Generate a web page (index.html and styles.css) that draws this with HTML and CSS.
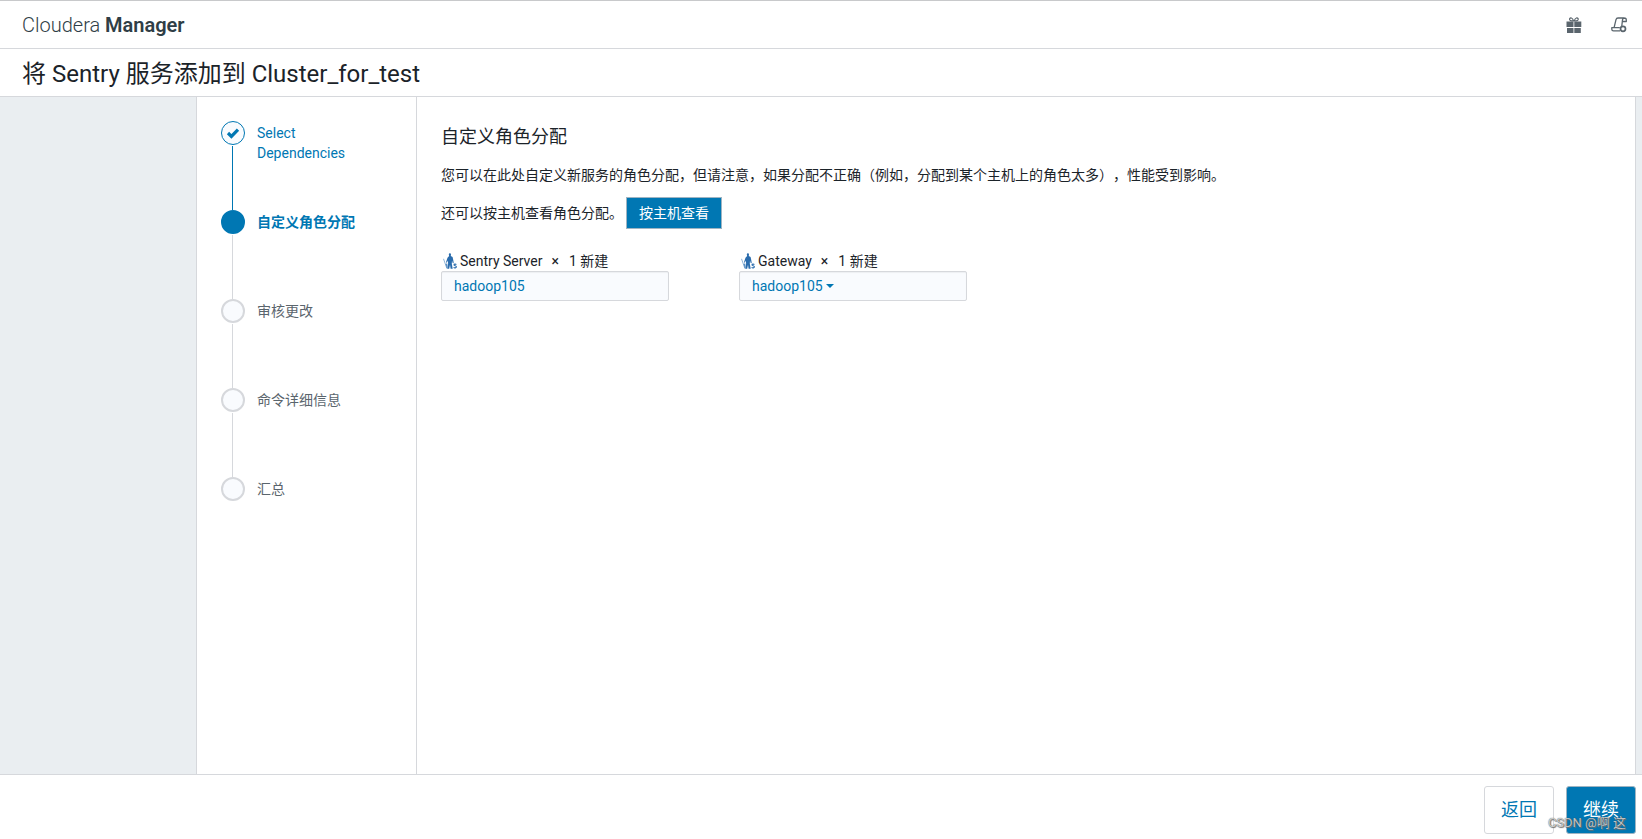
FILE: index.html
```html
<!DOCTYPE html>
<html lang="zh-CN">
<head>
<meta charset="utf-8">
<meta name="viewport" content="width=device-width, initial-scale=1">
<title>Cloudera Manager</title>
<link rel="stylesheet" href="styles.css">
</head>
<body>
<svg class="defs" aria-hidden="true">
  <symbol id="role-icon" viewBox="0 0 14 16">
    <path d="M5.800 1.200Q5.800.2 6.900.2T8 1.300L7.800 2.900 9.600 4l.9 4.200.2 2-1-.2L9 7.500l-.2 3.200.9 5H7.600L7 11.800l-.8 3.900H4.400l.7-5.200-.2-3L3.800 9.800l-.8-.6 1.500-4.400 1.600-1.900z" fill="#2a6cad"/>
    <path d="M.5 5.800l3.300 9.400" fill="none" stroke="#8fb4d8" stroke-width="1"/>
    <path d="M2.600 11l1.600-.8.700 5.400H3.700z" fill="#5b90c3"/>
    <path d="M13.400 11.500c-1-.7-2.500-.4-2.400.5.200 1 2.400.6 2.400 1.800 0 1.200-1.900 1.400-2.800.6" fill="none" stroke="#2a6cad" stroke-width="1.100"/>
  </symbol>
</svg>
<header class="topbar">
  <div class="brand">Cloudera <strong>Manager</strong></div>
  <div class="tools">
    <button class="tool" type="button" aria-label="新增功能">
      <svg width="16" height="16" viewBox="0 0 16 16" fill="#5a656d">
        <path d="M.5 4.500h7V10h-7zM8.300 4.500h7V10h-7zM1 11h6.500v5H1zM8.300 11h6.500v5H8.300z"/>
        <path d="M7.500 4C4.500 4 3.300 3.300 3.600 2 4 .4 6.700.3 7.500 4zM8.300 4c3 0 4.200-.7 3.900-2C11.800.4 9.100.3 8.300 4z" fill="none" stroke="#5a656d" stroke-width="1.200"/>
      </svg>
    </button>
    <button class="tool" type="button" aria-label="正在运行的命令">
      <svg width="16" height="16" viewBox="0 0 16 16" fill="none" stroke="#5a656d" stroke-width="1.300" stroke-linejoin="round">
        <path d="M3.200 10.200L5 2.700C5.300 1.500 6 1 7 1h6.500M13.500 1c-1.100 0-1.900.8-2 1.900L10.800 9M13.300 1c1.300 0 2 .9 2 2v1.500h-3.900M9 13.800H2.500C1.300 13.800.8 13 .8 12.200v-1.600h8"/>
        <circle cx="12" cy="11.800" r="2.500" stroke-width="1.700"/>
      </svg>
    </button>
  </div>
</header>
<div class="titlebar"><h1>将 Sentry 服务添加到 Cluster_for_test</h1></div>
<div class="workspace">
  <nav class="sidebar" aria-label="步骤">
    <ol class="steps">
      <li class="step done">
        <span class="marker"><svg width="14" height="12" viewBox="0 0 14 12"><path d="M2 6l3.400 3.400L12 2.600" fill="none" stroke="#0077b3" stroke-width="3.200"/></svg></span>
        <span class="label">Select Dependencies</span>
      </li>
      <li class="step current" aria-current="step"><span class="marker"></span><span class="label">自定义角色分配</span></li>
      <li class="step"><span class="marker"></span><span class="label">审核更改</span></li>
      <li class="step"><span class="marker"></span><span class="label">命令详细信息</span></li>
      <li class="step"><span class="marker"></span><span class="label">汇总</span></li>
    </ol>
  </nav>
  <main class="content">
    <h2>自定义角色分配</h2>
    <p class="intro">您可以在此处自定义新服务的角色分配，但请注意，如果分配不正确（例如，分配到某个主机上的角色太多），性能受到影响。</p>
    <div class="by-host">
      <span>还可以按主机查看角色分配。</span>
      <button class="btn-small" type="button">按主机查看</button>
    </div>
    <div class="roles">
      <section class="role">
        <div class="role-head" id="role-server"><svg class="role-icon" width="14" height="16"><use href="#role-icon"/></svg><span class="name">Sentry Server</span><span class="times">×</span><span>1 新建</span></div>
        <button class="hosts" type="button" aria-describedby="role-server">hadoop105</button>
      </section>
      <section class="role">
        <div class="role-head" id="role-gateway"><svg class="role-icon" width="14" height="16"><use href="#role-icon"/></svg><span class="name">Gateway</span><span class="times">×</span><span>1 新建</span></div>
        <button class="hosts" type="button" aria-haspopup="true" aria-describedby="role-gateway">hadoop105<span class="caret"></span></button>
      </section>
    </div>
  </main>
</div>
<footer class="actions">
  <button class="btn" type="button">返回</button>
  <button class="btn primary" type="button">继续</button>
  <span class="credit">CSDN @啊 这</span>
</footer>
</body>
</html>
```
FILE: styles.css
```css
* {
  box-sizing: border-box;
}

body {
  margin: 0;
  min-height: 100vh;
  display: flex;
  flex-direction: column;
  background: #fff;
  color: #1b2329;
  font: 14px/20px Roboto, "Noto Sans CJK SC", sans-serif;
  text-spacing-trim: space-all;
}

button {
  font: inherit;
  cursor: pointer;
}

.defs {
  position: absolute;
  width: 0;
  height: 0;
}

.topbar {
  display: flex;
  align-items: center;
  justify-content: space-between;
  height: 49px;
  padding: 0 15px 0 22px;
  border-top: 1px solid #c8c9cb;
  border-bottom: 1px solid #d6d8dc;
}

.brand {
  color: #2f3e46;
  font-size: 20px;
  font-weight: 300;
  line-height: 24px;
}

.brand strong {
  font-weight: 600;
}

.tools {
  display: flex;
  gap: 29px;
}

.tool {
  display: flex;
  padding: 0;
  border: 0;
  background: none;
}

.titlebar {
  display: flex;
  align-items: center;
  height: 48px;
  padding: 2px 22px 0;
  border-bottom: 1px solid #d6d8dc;
}

h1 {
  margin: 0;
  font-size: 24px;
  font-weight: 400;
  line-height: 32px;
}

.workspace {
  flex: 1;
  display: flex;
  padding: 0 6px 0 196px;
  background: #eaeef1;
}

.sidebar {
  flex: 0 0 220px;
  padding: 24px;
  border-left: 1px solid #d6d8dc;
  background: #fff;
}

.steps {
  margin: 0;
  padding: 0;
  list-style: none;
}

.step {
  display: grid;
  grid-template-columns: 24px 1fr;
  grid-template-rows: 24px 1fr;
  column-gap: 12px;
  min-height: 89px;
  color: #5a656d;
}

.marker {
  display: flex;
  align-items: center;
  justify-content: center;
  width: 24px;
  height: 24px;
  border: 2px solid #d6d8dc;
  border-radius: 50%;
  background: #f9fbfe;
}

.step::after {
  content: "";
  grid-column: 1;
  grid-row: 2;
  width: 1px;
  margin: 1px 0 0 11px;
  background: #d6d8dc;
}

.step:last-child::after {
  display: none;
}

.label {
  grid-column: 2;
  grid-row: 1 / 3;
  padding: 2px 24px 0 0;
}

.done {
  color: #0077b3;
}

.done .marker {
  border: 1px solid #0077b3;
}

.done::after {
  background: #0077b3;
}

.current {
  color: #0077b3;
  font-weight: 700;
}

.current .marker {
  border-color: #0077b3;
  background: #0077b3;
}

.content {
  flex: 1;
  padding: 24px;
  border-left: 1px solid #d6d8dc;
  border-right: 1px solid #d6d8dc;
  background: #fff;
}

h2 {
  margin: 4px 0 16px;
  font-size: 18px;
  font-weight: 400;
  line-height: 24px;
}

.intro {
  margin: 0 0 12px;
}

.by-host {
  display: flex;
  align-items: center;
  gap: 3px;
}

.btn-small {
  height: 32px;
  padding: 0 12px;
  border: 1px solid #9fb4c2;
  background: #0077b3;
  color: #fff;
}

.roles {
  display: flex;
  gap: 70px;
  margin-top: 22px;
}

.role {
  width: 228px;
}

.role-head {
  display: flex;
  align-items: center;
  padding-left: 2px;
}

.role-icon {
  margin-right: 3px;
}

.times {
  margin: 0 10px 0 9px;
}

.hosts {
  display: flex;
  align-items: center;
  width: 100%;
  height: 30px;
  padding: 0 12px;
  border: 1px solid #d6d8dc;
  border-radius: 2px;
  background: #f9fbfe;
  box-shadow: inset 0 1px 1px #0000000d;
  color: #0077b3;
}

.caret {
  margin-left: 3px;
  border: 4px solid transparent;
  border-top-color: #0077b3;
  border-bottom: 0;
}

.actions {
  position: relative;
  display: flex;
  justify-content: flex-end;
  gap: 12px;
  padding: 11px 6px 5px;
  border-top: 1px solid #d6d8dc;
}

.btn {
  height: 48px;
  padding: 0 16px;
  border: 1px solid #d6d8dc;
  border-radius: 3px;
  background: #fff;
  color: #0077b3;
  font-size: 18px;
}

.primary {
  border-color: #9fb4c2;
  background: #0077b3;
  color: #fff;
}

.credit {
  position: absolute;
  right: 16px;
  bottom: 6px;
  color: #ffffffb3;
  font-size: 13px;
  text-shadow: 0 0 1px #333, 1px 1px 1px #777;
}
```
